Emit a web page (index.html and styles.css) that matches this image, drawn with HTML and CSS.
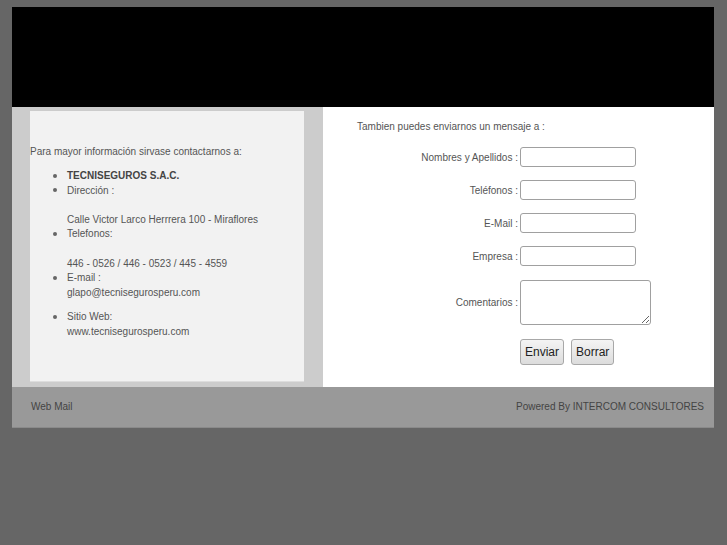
FILE: index.html
```html
<!DOCTYPE html>
<html lang="es">
<head>
<meta charset="utf-8">
<title>Contacto - Tecniseguros</title>
<link rel="stylesheet" href="styles.css">
</head>
<body>
<div class="page">
  <div class="header"></div>
  <div class="main">
    <div class="left">
      <div class="panel">
        <p class="intro">Para mayor información sirvase contactarnos a:</p>
        <ul class="info">
          <li><strong>TECNISEGUROS S.A.C.</strong></li>
          <li>Dirección :<br><br>Calle Victor Larco Herrrera 100 - Miraflores</li>
          <li>Telefonos:<br><br>446 - 0526 / 446 - 0523 / 445 - 4559</li>
          <li>E-mail :<br>glapo@tecnisegurosperu.com</li>
          <li class="web">Sitio Web:<br>www.tecnisegurosperu.com</li>
        </ul>
      </div>
    </div>
    <div class="right">
      <p class="lead">Tambien puedes enviarnos un mensaje a :</p>
      <form class="form">
        <label class="lbl" for="n">Nombres y Apellidos :</label><input class="inp" id="n" type="text">
        <label class="lbl" for="t">Teléfonos :</label><input class="inp" id="t" type="text">
        <label class="lbl" for="e">E-Mail :</label><input class="inp" id="e" type="text">
        <label class="lbl" for="m">Empresa :</label><input class="inp" id="m" type="text">
        <label class="lbl" for="c">Comentarios :</label><textarea class="txt" id="c"></textarea>
        <span></span>
        <div class="btns"><button class="btn" type="button">Enviar</button><button class="btn" type="reset">Borrar</button></div>
      </form>
    </div>
  </div>
  <div class="footer">
    <span>Web Mail</span>
    <span>Powered By INTERCOM CONSULTORES</span>
  </div>
</div>
</body>
</html>
```
FILE: styles.css
```css
html, body {
  margin: 0;
  padding: 0;
  background: #666666;
}
body {
  font-family: "Liberation Sans", Arial, sans-serif;
  font-size: 10px;
  color: #555555;
}
.page {
  width: 702px;
  margin: 7px 0 0 12px;
}
.header {
  height: 100px;
  background: #000000;
}
.main {
  display: flex;
  height: 280px;
}
.left {
  width: 311px;
  background: #cccccc;
  padding: 4px 19px 5px 18px;
  box-sizing: border-box;
}
.panel {
  height: 100%;
  background: #f2f2f2;
  border-bottom: 1px solid #dddddd;
  box-sizing: border-box;
  padding-top: 34px;
}
.intro {
  margin: 0;
  line-height: 14px;
}
.info {
  margin: 10px 0 0;
  padding-left: 37px;
  line-height: 14.6px;
}
.info li {
  list-style: none;
}
.info li::before {
  content: "";
  display: inline-block;
  width: 4px;
  height: 4px;
  border-radius: 50%;
  background: #666666;
  margin: 0 10px 1px -14px;
  vertical-align: middle;
}
.info strong {
  font-weight: bold;
  color: #444444;
}
.info .web {
  margin-top: 10px;
}
.right {
  flex: 1;
  background: #ffffff;
  padding: 13px 0 0 34px;
}
.lead {
  margin: 0;
  line-height: 14px;
}
.form {
  display: grid;
  grid-template-columns: 161px auto;
  column-gap: 2px;
  row-gap: 13px;
  align-items: center;
  justify-items: start;
  margin-top: 13px;
}
.lbl {
  justify-self: end;
}
.inp {
  width: 116px;
  height: 20px;
  box-sizing: border-box;
  border: 1px solid #a0a0a0;
  border-radius: 3px;
  background: #ffffff;
  margin: 0;
  padding: 0 3px;
}
.txt {
  width: 131px;
  height: 45px;
  box-sizing: border-box;
  border: 1px solid #a0a0a0;
  border-radius: 3px;
  margin: 1px 0 0;
  padding: 2px;
  resize: both;
}
.btns {
  display: flex;
  gap: 7px;
  margin-top: 1px;
}
.btn {
  height: 26px;
  padding: 0 4px;
  font-family: "Liberation Sans", Arial, sans-serif;
  font-size: 12px;
  color: #222222;
  border: 1px solid #a8a8a8;
  border-radius: 3px;
  background: linear-gradient(#f4f4f4, #dcdcdc);
  margin: 0;
}
.footer {
  height: 41px;
  background: #999999;
  border-bottom: 1px solid #8a8a8a;
  box-sizing: border-box;
  display: flex;
  justify-content: space-between;
  align-items: center;
  padding: 0 10px 1px 19px;
  color: #444444;
}
```
